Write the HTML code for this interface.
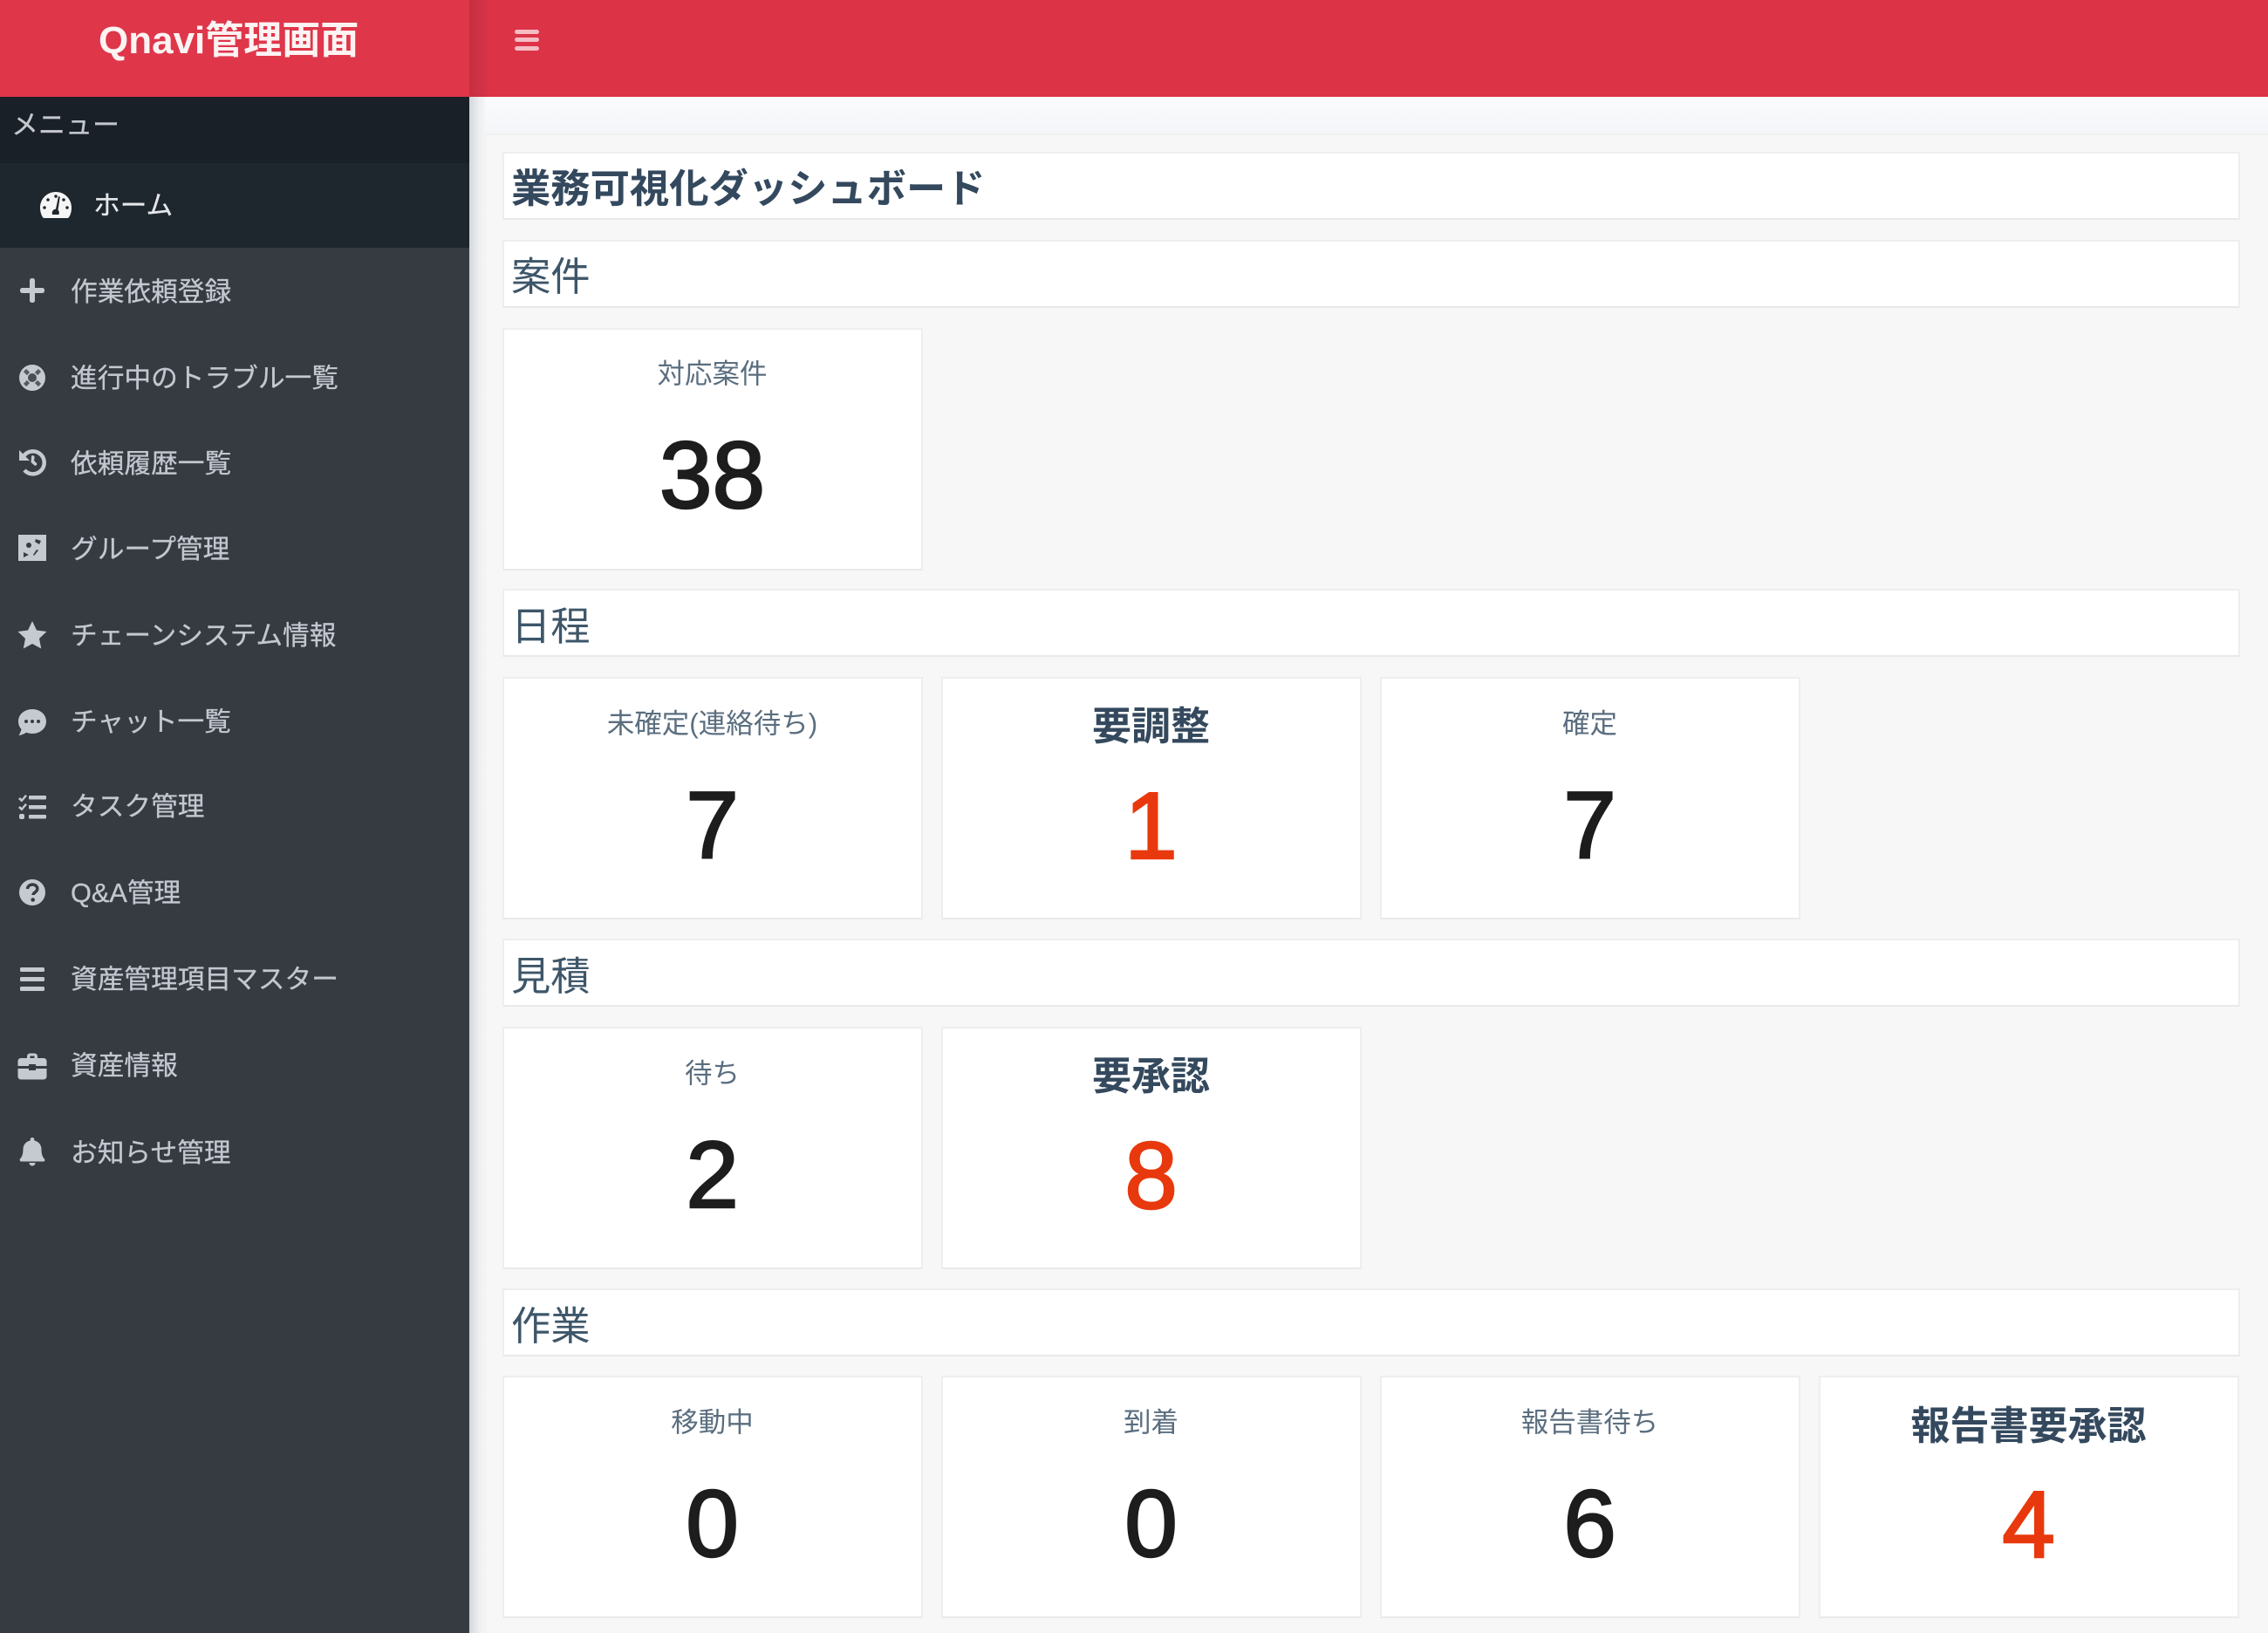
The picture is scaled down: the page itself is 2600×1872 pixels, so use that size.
<!DOCTYPE html>
<html lang="ja"><head><meta charset="utf-8"><title>Qnavi管理画面</title>
<style>
html,body{margin:0;padding:0;width:2600px;height:1872px;overflow:hidden;background:#f7f7f7}
body{position:relative;font-family:"Liberation Sans","Noto Sans CJK JP",sans-serif}
.a{position:absolute}
.strip{left:538px;top:111px;width:2062px;height:43px;background:linear-gradient(#fafbfc,#f4f6f9)}
.shade{left:538px;top:111px;width:18px;height:1761px;background:linear-gradient(90deg,#d3d7dc,#eceef1 60%,#f4f5f7)}
.box{left:555px;top:153px;width:2045px;height:1719px;background:#f7f7f7;border-top:2px solid #f1f1f1;border-left:2px solid #f1f1f1;box-sizing:border-box}
.top{left:0;top:0;width:2600px;height:111px;background:#dc3347}
.topsh{left:538px;top:0;width:24px;height:111px;background:linear-gradient(90deg,#c42f41,#dc3347)}
.brand{left:0;top:0;width:538px;height:111px;background:#df364a}
.logo{left:113px;top:22px;font-size:44px;line-height:50px;font-weight:700;color:#fdf3f3;white-space:nowrap}
.hb{left:590px;width:28px;height:5px;border-radius:3px;background:#f6bcc4}
.side{left:0;top:111px;width:538px;height:1761px;background:#363b41}
.mh{left:0;top:111px;width:538px;height:76px;background:#1a2027}
.hm{left:0;top:187px;width:538px;height:97px;background:#1f272e}
.mt{left:13px;top:122px;font-size:31px;line-height:44px;color:#c4c8ce;white-space:nowrap;-webkit-text-stroke:.3px #c4c8ce}
.n{left:81px;font-size:30.7px;line-height:44px;color:#c2c7d0;white-space:nowrap;-webkit-text-stroke:.3px #c2c7d0}
svg.i{position:absolute;left:20px;width:34px;height:34px;fill:#c5c9d0}
.p{left:576px;width:1992px;height:78px;background:#fff;border:2px solid #eeeeee;border-bottom-color:#e9e9e9;box-sizing:border-box}
.pt{left:586px;font-size:45.300px;line-height:60px;color:#3d5669;white-space:nowrap}
.c{width:482px;height:278px;background:#fff;border:2px solid #eeeeee;border-bottom-color:#eaeaea;box-sizing:border-box}
.l{width:481px;text-align:center;font-size:31.500px;line-height:44px;color:#5b6e7f;white-space:nowrap;margin-left:-1px}
.lb{width:481px;text-align:center;font-size:45px;line-height:60px;font-weight:700;color:#34495e;white-space:nowrap;margin-left:-1px}
.v{width:481px;text-align:center;font-size:109px;line-height:120px;color:#1d1d1d;-webkit-text-stroke:2.400px #1d1d1d;margin-left:-1px}
.r{color:#e8380d;-webkit-text-stroke:2.400px #e8380d}
</style></head><body>
<div class="a strip"></div><div class="a box"></div><div class="a shade"></div>
<div class="a top"></div><div class="a topsh"></div><div class="a brand"></div>
<div class="a logo">Qnavi管理画面</div>
<div class="a hb" style="top:34px"></div><div class="a hb" style="top:43px"></div><div class="a hb" style="top:53px"></div>

<div class="a side"></div><div class="a mh"></div><div class="a hm"></div>
<div class="a mt">メニュー</div>

<svg class="i" style="left:46px;top:217px;width:36px;height:36px;fill:#f5f5f5" viewBox="0 0 36 36"><path d="M18 3C8 3 0 11 0 21c0 4 1 8 3 11 .5.8 1.200 1 2 1h26c.8 0 1.500-.2 2-1 2-3 3-7 3-11C36 11 28 3 18 3z"/><g fill="#1f272e"><circle cx="18" cy="8" r="1.800"/><circle cx="9" cy="12" r="1.800"/><circle cx="27" cy="12" r="1.800"/><circle cx="5" cy="21" r="1.800"/><circle cx="31" cy="21" r="1.800"/><path d="M21 8l1.800.6-2.300 15c1.600 1.600 1.500 3.400 1 5.400H14c-1-3 .5-6 4-6.400z"/></g></svg>
<div class="a n" style="left:107px;top:214px;color:#e4e6ea;-webkit-text-stroke:.3px #e4e6ea">ホーム</div>

<svg class="i" style="top:316px" viewBox="0 0 34 34"><rect x="3" y="14" width="28" height="6" rx="2.500"/><rect x="14" y="3" width="6" height="28" rx="2.500"/></svg>
<div class="a n" style="top:313px">作業依頼登録</div>

<svg class="i" style="top:416px" viewBox="0 0 34 34"><circle cx="17" cy="17" r="15"/><circle cx="17" cy="17" r="5" fill="#4a4f55"/><path d="M8.500 8.500l4 4M21.500 21.500l4 4M25.500 8.500l-4 4M12.500 21.500l-4 4" stroke="#565b61" stroke-width="4.500"/></svg>
<div class="a n" style="top:412px">進行中のトラブル一覧</div>

<svg class="i" style="top:513px" viewBox="0 0 34 34"><path d="M7 10A13 13 0 1 1 8 26" fill="none" stroke="#c5c9d0" stroke-width="4.500"/><path d="M2 3v12h12z"/><path d="M17 9c2 0 3 1.500 2.500 3l-.5 3 3 3c1 1.500-.5 3.500-2.500 2.500L15.500 17l.5-6c.2-1.200.5-2 1-2z"/></svg>
<div class="a n" style="top:510px">依頼履歴一覧</div>

<svg class="i" style="top:611px" viewBox="0 0 34 34"><path d="M1 2h32v30H1z"/><g fill="#363b41"><circle cx="13" cy="14" r="3"/><path d="M21 7l6 2-2 4-5-3zM7 22l6 3-6 3zM22 19l2 1-5 6-1-1z"/></g></svg>
<div class="a n" style="top:608px">グループ管理</div>

<svg class="i" style="top:711px" viewBox="0 0 34 34"><path d="M17 1l5 10.500 11.500 1.500-8.500 8 2.200 11.500L17 27l-10.200 5.500L9 21 .5 13 12 11.500z"/></svg>
<div class="a n" style="top:707px">チェーンシステム情報</div>

<svg class="i" style="top:811px" viewBox="0 0 34 34"><path d="M17 2C8 2 1 8 1 16c0 3.500 1.300 6.500 3.500 9-.5 2.500-1.800 5-3 7 3-.3 6-1.400 8.500-3.200 2.200.8 4.700 1.200 7 1.200 9 0 16-6 16-14S26 2 17 2z"/><g fill="#363b41"><circle cx="10" cy="16" r="2"/><circle cx="17" cy="16" r="2"/><circle cx="24" cy="16" r="2"/></g></svg>
<div class="a n" style="top:806px">チャット一覧</div>

<svg class="i" style="top:908px" viewBox="0 0 34 34"><path d="M3 6l2 2 4-5 2 1.500-6 7L1 8zM3 16l2 2 4-5 2 1.500-6 7L1 18z"/><rect x="2" y="25" width="6" height="6" rx="2"/><rect x="13" y="4" width="20" height="4.500" rx="1"/><rect x="13" y="15" width="20" height="4.500" rx="1"/><rect x="13" y="26" width="20" height="4.500" rx="1"/></svg>
<div class="a n" style="top:903px">タスク管理</div>

<svg class="i" style="top:1006px" viewBox="0 0 34 34"><circle cx="17" cy="17" r="15"/><path d="M11.500 13c.3-3 2.700-5 5.700-5 3.200 0 5.600 2 5.600 4.800 0 4.200-4.800 3.900-4.800 7.200" fill="none" stroke="#363b41" stroke-width="3.500"/><circle cx="17.700" cy="25.500" r="2.300" fill="#363b41"/></svg>
<div class="a n" style="top:1002px">Q&amp;A管理</div>

<svg class="i" style="top:1106px" viewBox="0 0 34 34"><rect x="3" y="3" width="28" height="5" rx="1.500"/><rect x="3" y="14" width="28" height="5" rx="1.500"/><rect x="3" y="25" width="28" height="5" rx="1.500"/></svg>
<div class="a n" style="top:1101px">資産管理項目マスター</div>

<svg class="i" style="top:1205px" viewBox="0 0 34 34"><path d="M11 6c0-2 1.500-3.500 3.500-3.500h5C21.500 2.500 23 4 23 6v2h7c2 0 3.500 1.500 3.500 3.500V17H21v-2h-8v2H.5v-5.500C.5 9.500 2 8 4 8h7zm3.500 2h5V5.500h-5zM.5 20H13v2h8v-2h12.500v9c0 2-1.500 3.500-3.500 3.500H4C2 32.500.5 31 .5 29z"/></svg>
<div class="a n" style="top:1200px">資産情報</div>

<svg class="i" style="top:1303px" viewBox="0 0 34 34"><path d="M17 1c1.300 0 2.300 1 2.300 2.300v1.200c5 1 8.200 5 8.200 10 0 6 1.500 9 3.500 11.200.9 1 .2 2.800-1.200 2.800H4.200C2.800 28.300 2.100 26.500 3 25.500 5 23.300 6.500 20.500 6.500 14.500c0-5 3.200-9 8.200-10V3.300C14.700 2 15.700 1 17 1z"/><path d="M13.500 30h7c0 2-1.500 3.500-3.500 3.500s-3.500-1.500-3.500-3.500z"/></svg>
<div class="a n" style="top:1300px">お知らせ管理</div>

<!-- title -->
<div class="a p" style="top:174px"></div>
<div class="a pt" style="top:187px;font-weight:700;color:#34495e">業務可視化ダッシュボード</div>

<!-- 案件 -->
<div class="a p" style="top:275px"></div>
<div class="a pt" style="top:288px">案件</div>
<div class="a c" style="left:576px;top:376px"></div>
<div class="a l" style="left:577px;top:406px">対応案件</div>
<div class="a v" style="left:577px;top:485px">38</div>

<!-- 日程 -->
<div class="a p" style="top:675px"></div>
<div class="a pt" style="top:689px">日程</div>
<div class="a c" style="left:576px;top:776px"></div>
<div class="a l" style="left:577px;top:807px">未確定(連絡待ち)</div>
<div class="a v" style="left:577px;top:886px">7</div>
<div class="a c" style="left:1079px;top:776px"></div>
<div class="a lb" style="left:1080px;top:803px">要調整</div>
<div class="a v r" style="left:1080px;top:887px">1</div>
<div class="a c" style="left:1582px;top:776px"></div>
<div class="a l" style="left:1583px;top:807px">確定</div>
<div class="a v" style="left:1583px;top:886px">7</div>

<!-- 見積 -->
<div class="a p" style="top:1076px"></div>
<div class="a pt" style="top:1090px">見積</div>
<div class="a c" style="left:576px;top:1177px"></div>
<div class="a l" style="left:577px;top:1208px">待ち</div>
<div class="a v" style="left:577px;top:1287px">2</div>
<div class="a c" style="left:1079px;top:1177px"></div>
<div class="a lb" style="left:1080px;top:1204px">要承認</div>
<div class="a v r" style="left:1080px;top:1288px">8</div>

<!-- 作業 -->
<div class="a p" style="top:1477px"></div>
<div class="a pt" style="top:1491px">作業</div>
<div class="a c" style="left:576px;top:1577px"></div>
<div class="a l" style="left:577px;top:1608px">移動中</div>
<div class="a v" style="left:577px;top:1687px">0</div>
<div class="a c" style="left:1079px;top:1577px"></div>
<div class="a l" style="left:1080px;top:1608px">到着</div>
<div class="a v" style="left:1080px;top:1687px">0</div>
<div class="a c" style="left:1582px;top:1577px"></div>
<div class="a l" style="left:1583px;top:1608px">報告書待ち</div>
<div class="a v" style="left:1583px;top:1687px">6</div>
<div class="a c" style="left:2085px;top:1577px"></div>
<div class="a lb" style="left:2086px;top:1605px">報告書要承認</div>
<div class="a v r" style="left:2086px;top:1688px">4</div>
</body></html>
